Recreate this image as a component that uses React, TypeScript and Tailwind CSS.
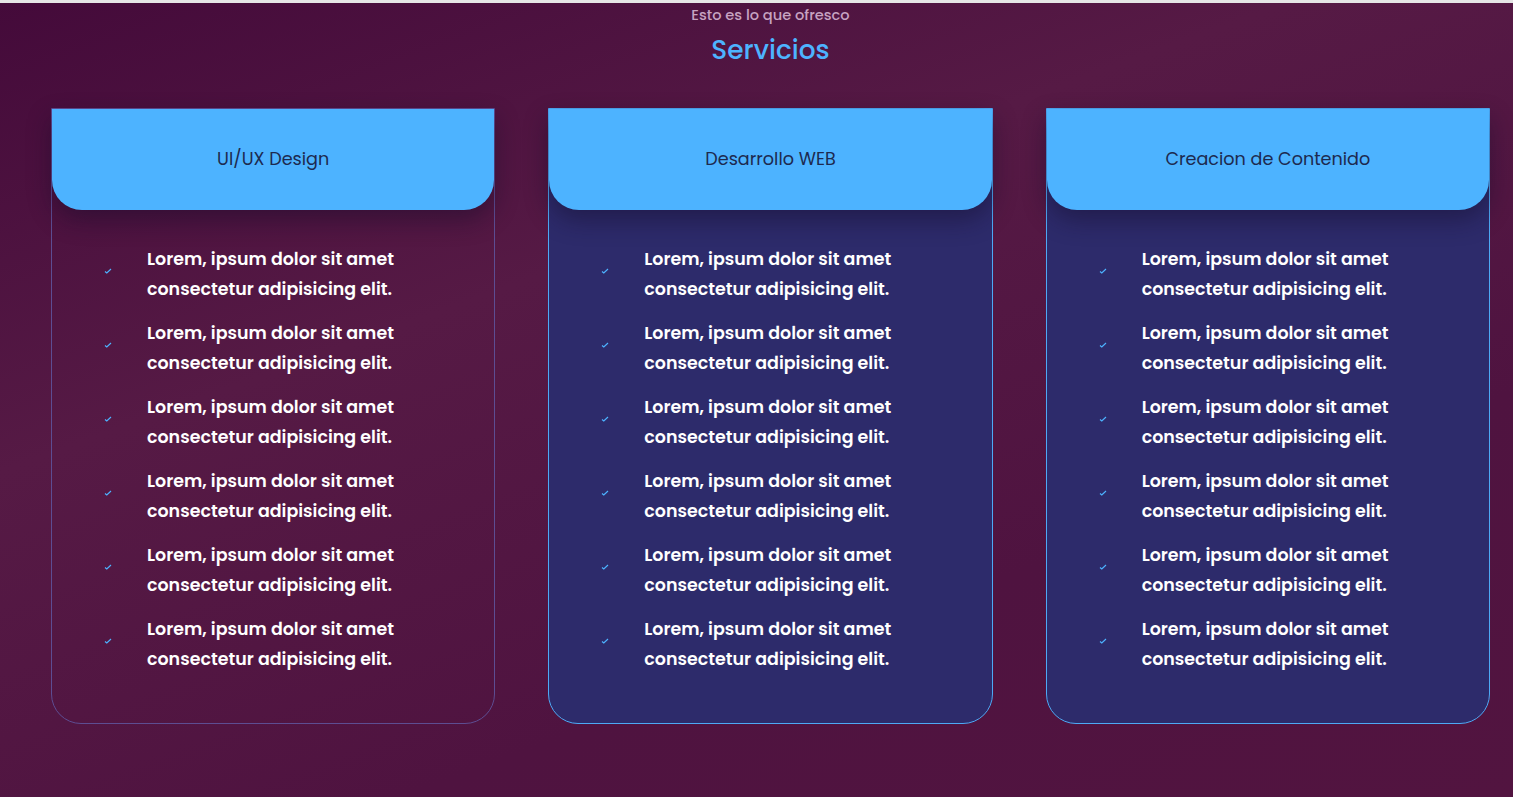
const services = [
  { title: "UI/UX Design", active: false },
  { title: "Desarrollo WEB", active: true },
  { title: "Creacion de Contenido", active: true },
];

const items = Array.from({ length: 6 });

function Check() {
  return (
    <svg width="8" height="6" viewBox="0 0 8 6" className="shrink-0">
      <path d="M1 3.5 L2.8 5 L7 1" fill="none" stroke="#4db3ff" strokeWidth="1.2" />
    </svg>
  );
}

function ServiceCard({ title, active }: { title: string; active: boolean }) {
  return (
    <div
      className={`flex flex-col h-[616px] rounded-b-[30px] border ${
        active ? "bg-[#2d2b6b] border-[#4da9f5]" : "border-[#5d4d92]"
      }`}
    >
      <div className="h-[101px] flex items-center justify-center bg-[#4db3ff] rounded-b-[30px] shadow-[0_10px_24px_rgba(20,10,40,0.45)]">
        <h3 className="text-[17.6px] text-[#1d2a4f] -mt-[1px]">{title}</h3>
      </div>
      <ul className="flex flex-col gap-[14px] pt-[34px] pl-[52px]">
        {items.map((_, i) => (
          <li key={i} className="flex items-center gap-[35px]">
            <span className="-mt-[7px]">
              <Check />
            </span>
            <p className="text-[17.45px] font-semibold leading-[30px] text-white">
              Lorem, ipsum dolor sit amet
              <br />
              consectetur adipisicing elit.
            </p>
          </li>
        ))}
      </ul>
    </div>
  );
}

export default function App() {
  return (
    <div className="min-h-[797px] w-full flex flex-col bg-[linear-gradient(160deg,#440a3a_0%,#561a45_35%,#4f1340_70%,#521440_100%)] font-['Poppins','Inter',sans-serif] overflow-hidden">
      <div className="h-[3px] bg-[#e6e6e6]" />
      <div className="w-[1439px] ml-[51px] shrink-0">
        <div className="flex flex-col items-center">
          <p className="text-[14.6px] font-medium leading-[24px] text-[#c7a3c2]">
            Esto es lo que ofresco
          </p>
          <h2 className="text-[26.4px] font-medium leading-[40px] text-[#4db3ff] mt-[3px]">
            Servicios
          </h2>
        </div>
        <div className="grid grid-cols-3 gap-[53px] mt-[38px]">
          {services.map((s) => (
            <ServiceCard key={s.title} title={s.title} active={s.active} />
          ))}
        </div>
      </div>
    </div>
  );
}
